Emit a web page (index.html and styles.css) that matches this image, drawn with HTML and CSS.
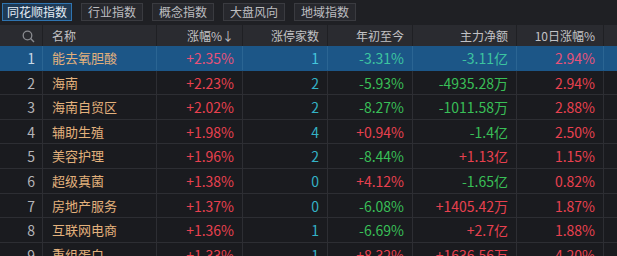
FILE: index.html
```html
<!DOCTYPE html>
<html lang="zh-CN">
<head>
<meta charset="utf-8">
<title>同花顺指数</title>
<link rel="stylesheet" href="styles.css">
</head>
<body>
<div class="panel">
  <div class="tabs">
    <span class="tab active">同花顺指数</span>
    <span class="tab">行业指数</span>
    <span class="tab">概念指数</span>
    <span class="tab">大盘风向</span>
    <span class="tab">地域指数</span>
  </div>
  <div class="grid">
    <div class="row head">
      <div class="c idx"><svg class="search" width="13" height="13" viewBox="0 0 13 13"><circle cx="5.5" cy="5.5" r="4.3" fill="none" stroke="#8a8b90" stroke-width="1.3"/><line x1="8.6" y1="8.6" x2="12" y2="12" stroke="#8a8b90" stroke-width="1.4"/></svg></div>
      <div class="c name">名称</div>
      <div class="c">涨幅%↓</div>
      <div class="c">涨停家数</div>
      <div class="c">年初至今</div>
      <div class="c">主力净额</div>
      <div class="c">10日涨幅%</div>
      <div class="c tail"></div>
    </div>
    <div class="row sel">
      <div class="c idx">1</div><div class="c name">能去氧胆酸</div><div class="c up">+2.35%</div><div class="c cy">1</div><div class="c dn">-3.31%</div><div class="c dn">-3.11亿</div><div class="c up">2.94%</div><div class="c tail"></div>
    </div>
    <div class="row">
      <div class="c idx">2</div><div class="c name">海南</div><div class="c up">+2.23%</div><div class="c cy">2</div><div class="c dn">-5.93%</div><div class="c dn">-4935.28万</div><div class="c up">2.94%</div><div class="c tail"></div>
    </div>
    <div class="row">
      <div class="c idx">3</div><div class="c name">海南自贸区</div><div class="c up">+2.02%</div><div class="c cy">2</div><div class="c dn">-8.27%</div><div class="c dn">-1011.58万</div><div class="c up">2.88%</div><div class="c tail"></div>
    </div>
    <div class="row">
      <div class="c idx">4</div><div class="c name">辅助生殖</div><div class="c up">+1.98%</div><div class="c cy">4</div><div class="c up">+0.94%</div><div class="c dn">-1.4亿</div><div class="c up">2.50%</div><div class="c tail"></div>
    </div>
    <div class="row">
      <div class="c idx">5</div><div class="c name">美容护理</div><div class="c up">+1.96%</div><div class="c cy">2</div><div class="c dn">-8.44%</div><div class="c up">+1.13亿</div><div class="c up">1.15%</div><div class="c tail"></div>
    </div>
    <div class="row">
      <div class="c idx">6</div><div class="c name">超级真菌</div><div class="c up">+1.38%</div><div class="c cy">0</div><div class="c up">+4.12%</div><div class="c dn">-1.65亿</div><div class="c up">0.82%</div><div class="c tail"></div>
    </div>
    <div class="row">
      <div class="c idx">7</div><div class="c name">房地产服务</div><div class="c up">+1.37%</div><div class="c cy">0</div><div class="c dn">-6.08%</div><div class="c up">+1405.42万</div><div class="c up">1.87%</div><div class="c tail"></div>
    </div>
    <div class="row">
      <div class="c idx">8</div><div class="c name">互联网电商</div><div class="c up">+1.36%</div><div class="c cy">1</div><div class="c dn">-6.69%</div><div class="c up">+2.7亿</div><div class="c up">1.88%</div><div class="c tail"></div>
    </div>
    <div class="row">
      <div class="c idx">9</div><div class="c name">重组蛋白</div><div class="c up">+1.33%</div><div class="c cy">1</div><div class="c up">+8.32%</div><div class="c up">+1636.56万</div><div class="c up">4.20%</div><div class="c tail"></div>
    </div>
  </div>
</div>
</body>
</html>
```

FILE: styles.css
```css
html, body {
  margin: 0;
  padding: 0;
  background: #1a1b1f;
  overflow: hidden;
}

.panel {
  width: 617px;
  height: 256px;
  font-family: "Noto Sans CJK SC", "Noto Sans", sans-serif;
  color: #c9c9cb;
}

/* tab strip */
.tabs {
  height: 25px;
  box-sizing: border-box;
  padding: 3px 0 0 2px;
  display: flex;
  gap: 9px;
  background: #1f2024;
}

.tab {
  height: 18px;
  box-sizing: border-box;
  padding: 0 6px;
  border: 1px solid #3a3b40;
  background: #27282d;
  font-size: 12px;
  line-height: 16px;
  color: #bdbdc0;
}

.tab.active {
  border-color: #2f74b0;
  background: #1f3a55;
  color: #e6eef6;
  padding: 0 4px;
}

/* table */
.grid {
  display: flex;
  flex-direction: column;
}

.row {
  display: grid;
  grid-template-columns: 43px 114px 86px 85px 85px 104px 87px 13px;
  height: 24.6px;
  border-bottom: 1px solid #2d2e33;
  box-sizing: border-box;
}

.row.head {
  height: 21px;
  background: #2a2b30;
  border-bottom: none;
}

.row.sel {
  background: #1c5687;
  border-bottom-color: #1c5687;
}

.c {
  border-right: 1px solid #2d2e33;
  text-align: right;
  padding-right: 8px;
  font-size: 14px;
  line-height: 24px;
  white-space: nowrap;
  overflow: hidden;
}

.row.sel .c {
  border-right-color: #2b6593;
}

.row.head .c {
  font-size: 12px;
  line-height: 21px;
  color: #c2c2c5;
  border-right-color: #1f2024;
}

.c.tail {
  border-right: none;
  padding: 0;
}

.c.idx {
  color: #b4b4b8;
  padding-right: 7px;
}

.row.sel .c.idx {
  color: #c8d8e6;
}

.search {
  vertical-align: -2px;
}

.c.name {
  text-align: left;
  padding-left: 9px;
  padding-right: 0;
  font-size: 13px;
  color: #e3b17c;
}

.row.head .c.name {
  color: #c2c2c5;
}

.up { color: #e8414f; }
.dn { color: #39bf57; }
.cy { color: #34b2c6; }

.row.sel .up { color: #e7527a; }
.row.sel .dn { color: #3cc4a0; }
.row.sel .cy { color: #45c6dc; }
```
